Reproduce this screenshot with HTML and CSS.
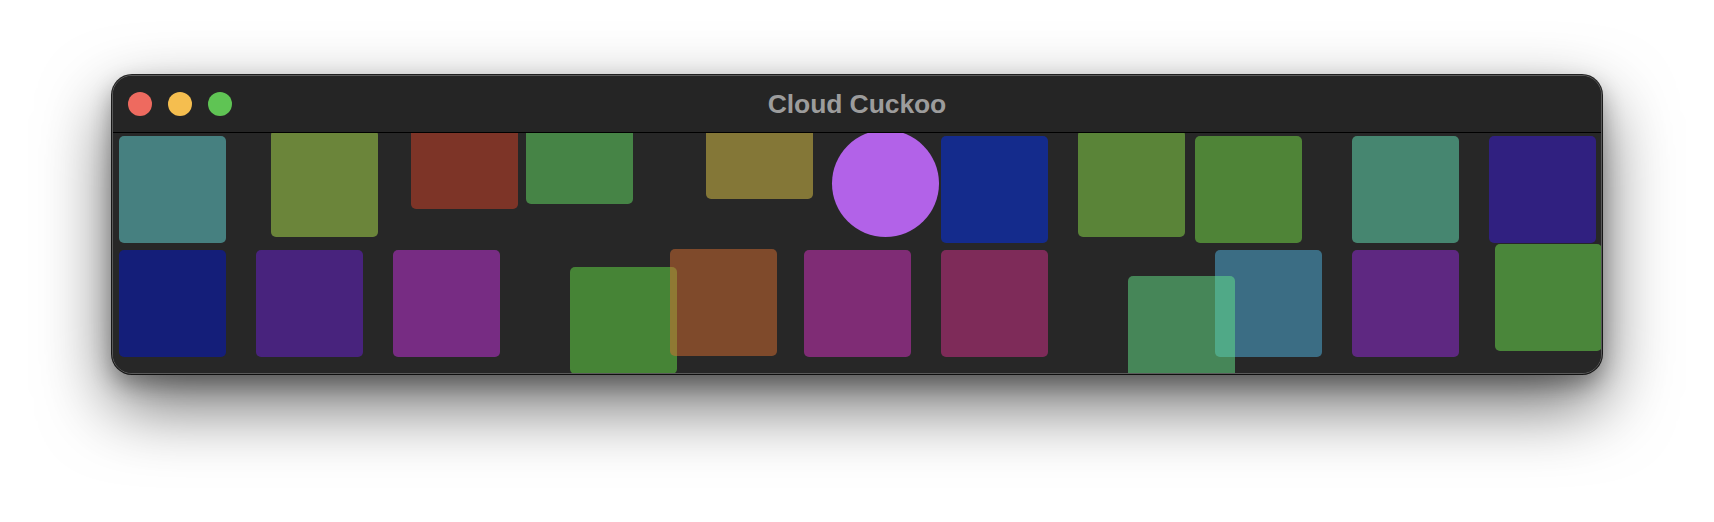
FILE: index.html
```html
<!DOCTYPE html>
<html>
<head>
<meta charset="utf-8">
<title>Cloud Cuckoo</title>
<link rel="stylesheet" href="styles.css">
</head>
<body>
<div class="window">
  <header class="titlebar">
    <div class="lights">
      <span class="light close"></span>
      <span class="light minimize"></span>
      <span class="light zoom"></span>
    </div>
    <div class="title">Cloud Cuckoo</div>
    <div></div>
  </header>
  <main class="canvas">
    <div class="tile" style="background:rgba(102,218,218,.5)"></div>
    <div class="tile" style="background:rgba(176,228,78,.5);transform:translate(15px,-6px)"></div>
    <div class="tile" style="background:rgba(212,66,40,.5);transform:translate(18px,-34px)"></div>
    <div class="tile" style="background:rgba(102,226,102,.5);transform:translate(-4px,-39px)"></div>
    <div class="tile" style="background:rgba(226,200,72,.5);transform:translate(39px,-44px)"></div>
    <div class="tile dot" style="background:#b262e8;transform:translate(28px,-6px)"></div>
    <div class="tile" style="background:rgba(2,48,242,.5)"></div>
    <div class="tile" style="background:rgba(142,226,74,.5);transform:translate(0,-6px)"></div>
    <div class="tile" style="background:rgba(120,226,72,.5);transform:translate(-20px,0)"></div>
    <div class="tile" style="background:rgba(102,230,186,.5)"></div>
    <div class="tile" style="background:rgba(58,26,218,.5)"></div>

    <div class="tile" style="background:rgba(2,22,204,.5)"></div>
    <div class="tile" style="background:rgba(106,32,212,.5)"></div>
    <div class="tile" style="background:rgba(200,50,224,.5)"></div>
    <div class="tile" style="background:rgba(102,226,70,.5);transform:translate(40px,17px)"></div>
    <div class="tile" style="background:rgba(216,110,48,.5);transform:translate(3px,-1px)"></div>
    <div class="tile" style="background:rgba(216,50,196,.5)"></div>
    <div class="tile" style="background:rgba(214,48,140,.5)"></div>
    <div class="tile" style="background:rgba(102,230,138,.5);transform:translate(50px,26px)"></div>
    <div class="tile" style="background:rgba(80,180,226,.5)"></div>
    <div class="tile" style="background:rgba(150,42,220,.5)"></div>
    <div class="tile" style="background:rgba(110,230,78,.5);transform:translate(6px,-6px)"></div>
  </main>
</div>
</body>
</html>
```
FILE: styles.css
```css
html, body {
  margin: 0;
  padding: 0;
  background: #ffffff;
}

body {
  box-sizing: border-box;
  min-height: 522px;
  padding: 75px 0 0 112px;
}

.window {
  width: 1490px;
  height: 299px;
  box-sizing: border-box;
  border: 1px solid #5a5a5a;
  border-radius: 20px;
  background: #262626;
  overflow: hidden;
  display: flex;
  flex-direction: column;
  box-shadow: 0 0 0 1px rgba(0, 0, 0, 0.85), 0 30px 70px rgba(0, 0, 0, 0.6), 0 10px 22px rgba(0, 0, 0, 0.3);
}

.titlebar {
  height: 56px;
  flex: none;
  border-bottom: 1px solid #000;
  background: #252525;
  display: grid;
  grid-template-columns: 1fr auto 1fr;
  align-items: center;
}

.lights {
  display: flex;
  gap: 16px;
  padding-left: 15px;
}

.light {
  width: 24px;
  height: 24px;
  border-radius: 50%;
}

.close { background: #ee6a5f; }
.minimize { background: #f5be4f; }
.zoom { background: #5fc454; }

.title {
  font-family: "Liberation Sans", Arial, sans-serif;
  font-weight: 700;
  font-size: 26.5px;
  color: #9c9c9c;
  letter-spacing: -0.1px;
}

.canvas {
  flex: 1;
  overflow: hidden;
  background: #272727;
  padding: 3px 0 0 6px;
  display: grid;
  grid-template-columns: repeat(11, 107px);
  grid-template-rows: 107px 107px;
  column-gap: 30px;
  row-gap: 7px;
}

.tile {
  width: 107px;
  height: 107px;
  border-radius: 5px;
}

.tile.dot {
  border-radius: 50%;
}
```
